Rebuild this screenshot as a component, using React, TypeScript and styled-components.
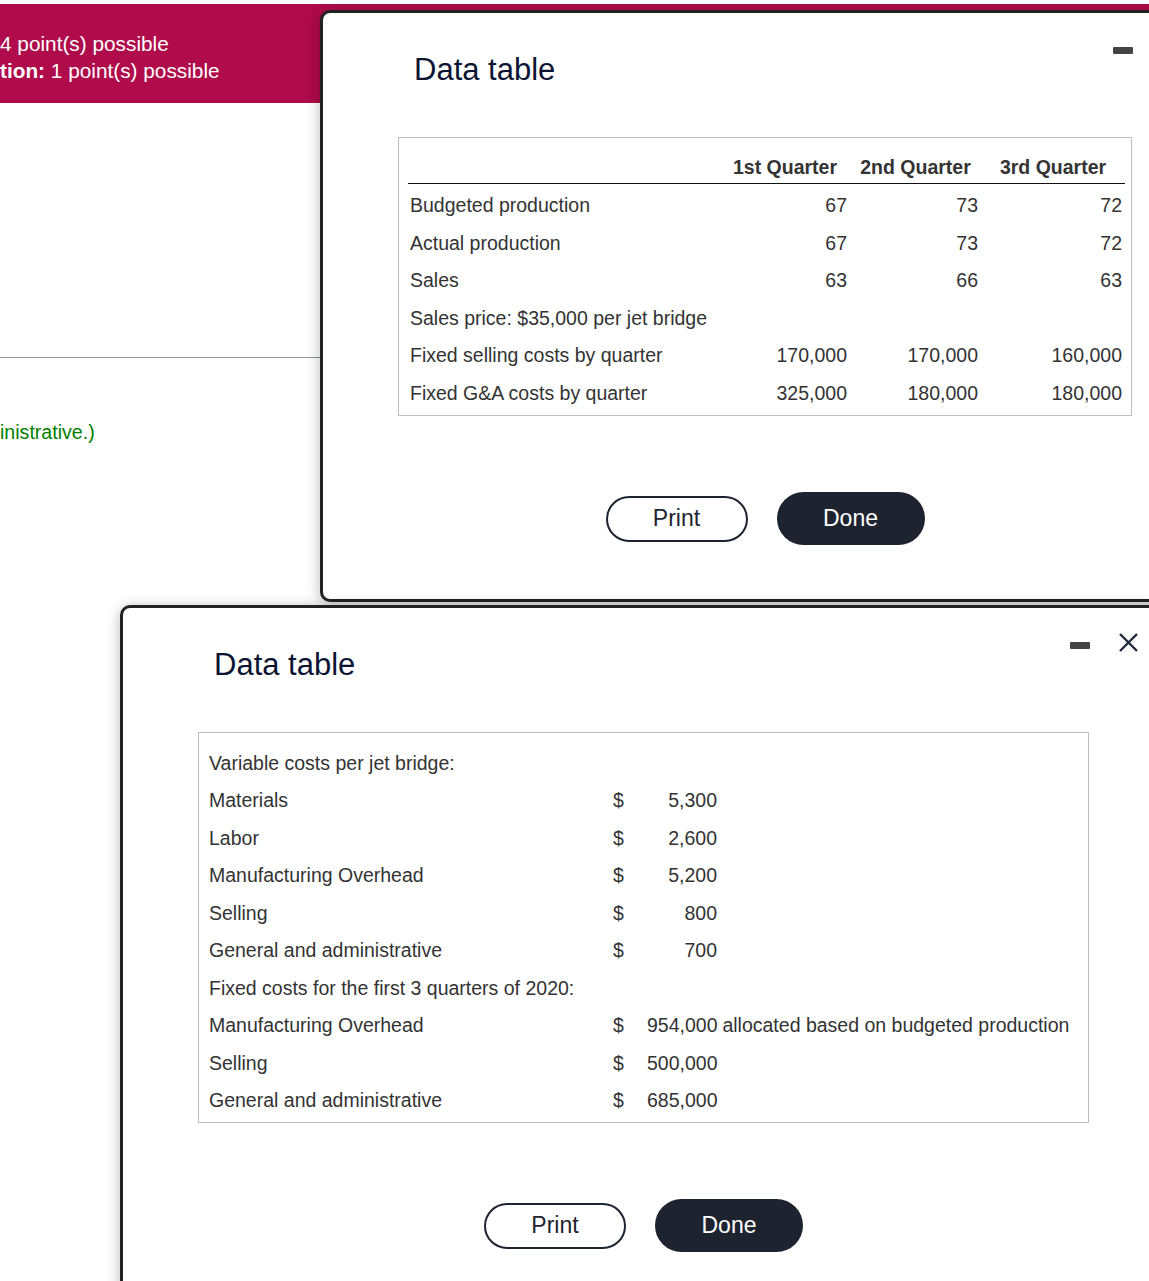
import React from 'react';
import styled, { createGlobalStyle } from 'styled-components';

const GlobalStyle = createGlobalStyle`
  html, body {
    margin: 0;
    padding: 0;
    background: #fff;
  }
  body {
    font-family: "Liberation Sans", Arial, sans-serif;
    overflow: hidden;
  }
`;

const Page = styled.div`
  position: relative;
  width: 1149px;
  height: 1281px;
  overflow: hidden;
  padding-top: 4px;
  box-sizing: border-box;
`;

const Banner = styled.div`
  height: 99px;
  background: #b00b4a;
  color: #fff;
  font-size: 20.8px;
  line-height: 27px;
  padding: 26px 0 0 0;
  box-sizing: border-box;
`;

const Divider = styled.div`
  margin-top: 254px;
  height: 1px;
  background: #8b94a3;
`;

const Note = styled.div`
  margin-top: 61px;
  color: #008000;
  font-size: 19.6px;
  line-height: 27px;
`;

const Modal = styled.div<{ $left: number; $top: number; $width: number; $height: number }>`
  position: absolute;
  left: ${(p) => p.$left}px;
  top: ${(p) => p.$top}px;
  width: ${(p) => p.$width}px;
  height: ${(p) => p.$height}px;
  box-sizing: border-box;
  border: 3px solid #222;
  border-radius: 10px;
  background: #fff;
  box-shadow: 0 2px 14px rgba(0, 0, 0, 0.28);
  padding: 39px 0 0 75px;
`;

const Title = styled.h2`
  margin: 0 0 49px 16px;
  font-size: 31px;
  line-height: 36px;
  font-weight: normal;
  color: #0b1533;
`;

const WindowControls = styled.div`
  position: absolute;
  top: 24px;
  right: 18px;
  display: flex;
  align-items: flex-start;
  gap: 28px;
`;

const MinimizeBar = styled.div`
  margin-top: 10px;
  width: 20px;
  height: 7px;
  border-radius: 1px;
  background: #444;
`;

const Content = styled.div<{ $width: number }>`
  width: ${(p) => p.$width}px;
  display: flex;
  flex-direction: column;
`;

const TableBox = styled.div<{ $pad: string }>`
  border: 1px solid #c0c0c0;
  padding: ${(p) => p.$pad};
`;

const Table = styled.table`
  width: 100%;
  border-collapse: collapse;
  table-layout: fixed;
  color: #333;
  font-size: 19.5px;
  line-height: 22px;
`;

const HeadCell = styled.th`
  font-weight: bold;
  text-align: center;
  padding: 10px 0 5px;
  border-bottom: 1px solid #111;
  white-space: nowrap;
`;

const QuarterCell = styled.td<{ $num?: boolean }>`
  padding: 10px 3px 5.5px 2px;
  text-align: ${(p) => (p.$num ? 'right' : 'left')};
  white-space: nowrap;
`;

const CostCell = styled.td<{ $indent: number }>`
  padding: 7.75px 0 7.75px ${(p) => p.$indent}px;
  white-space: nowrap;
`;

const Amount = styled.span`
  display: inline-block;
  width: 70px;
  text-align: right;
`;

const ButtonRow = styled.div`
  margin-top: 76px;
  display: flex;
  justify-content: center;
  align-items: center;
  gap: 29px;
`;

const PrintButton = styled.button`
  width: 142px;
  height: 46px;
  border: 2px solid #1e2330;
  border-radius: 23px;
  background: #fff;
  color: #1e2330;
  font-family: "Liberation Sans", Arial, sans-serif;
  font-size: 23px;
  cursor: pointer;
`;

const DoneButton = styled.button`
  width: 148px;
  height: 53px;
  border: none;
  border-radius: 27px;
  background: #1e2330;
  color: #fff;
  font-family: "Liberation Sans", Arial, sans-serif;
  font-size: 23px;
  cursor: pointer;
`;

const CloseIcon = () => (
  <svg width="21" height="21" viewBox="0 0 21 21">
    <path d="M2 2 L19 19 M19 2 L2 19" stroke="#1e2a3a" strokeWidth="2.4" fill="none" />
  </svg>
);

const quarterRows: { label: string; values: string[] }[] = [
  { label: 'Budgeted production', values: ['67', '73', '72'] },
  { label: 'Actual production', values: ['67', '73', '72'] },
  { label: 'Sales', values: ['63', '66', '63'] },
  { label: 'Sales price: $35,000 per jet bridge', values: [] },
  { label: 'Fixed selling costs by quarter', values: ['170,000', '170,000', '160,000'] },
  { label: 'Fixed G&A costs by quarter', values: ['325,000', '180,000', '180,000'] },
];

type CostRow =
  | { heading: string }
  | { label: string; amount: string; note?: string };

const costRows: CostRow[] = [
  { heading: 'Variable costs per jet bridge:' },
  { label: 'Materials', amount: '5,300' },
  { label: 'Labor', amount: '2,600' },
  { label: 'Manufacturing Overhead', amount: '5,200' },
  { label: 'Selling', amount: '800' },
  { label: 'General and administrative', amount: '700' },
  { heading: 'Fixed costs for the first 3 quarters of 2020:' },
  { label: 'Manufacturing Overhead', amount: '954,000', note: 'allocated based on budgeted production' },
  { label: 'Selling', amount: '500,000' },
  { label: 'General and administrative', amount: '685,000' },
];

const Buttons = () => (
  <ButtonRow>
    <PrintButton>Print</PrintButton>
    <DoneButton>Done</DoneButton>
  </ButtonRow>
);

const QuarterTable = () => (
  <TableBox $pad="8px 6px 6px 9px">
    <Table>
      <colgroup>
        <col style={{ width: 312 }} />
        <col style={{ width: 130 }} />
        <col style={{ width: 131 }} />
        <col style={{ width: 144 }} />
      </colgroup>
      <thead>
        <tr>
          <HeadCell />
          <HeadCell>1st Quarter</HeadCell>
          <HeadCell>2nd Quarter</HeadCell>
          <HeadCell>3rd Quarter</HeadCell>
        </tr>
      </thead>
      <tbody>
        {quarterRows.map((row) =>
          row.values.length === 0 ? (
            <tr key={row.label}>
              <QuarterCell colSpan={4}>{row.label}</QuarterCell>
            </tr>
          ) : (
            <tr key={row.label}>
              <QuarterCell>{row.label}</QuarterCell>
              {row.values.map((v, i) => (
                <QuarterCell key={i} $num>
                  {v}
                </QuarterCell>
              ))}
            </tr>
          ),
        )}
      </tbody>
    </Table>
  </TableBox>
);

const CostTable = () => (
  <TableBox $pad="11px 6px 3px 9px">
    <Table>
      <colgroup>
        <col style={{ width: 400 }} />
        <col style={{ width: 32 }} />
        <col />
      </colgroup>
      <tbody>
        {costRows.map((row, i) =>
          'heading' in row ? (
            <tr key={i}>
              <CostCell $indent={1} colSpan={3}>
                {row.heading}
              </CostCell>
            </tr>
          ) : (
            <tr key={i}>
              <CostCell $indent={1}>{row.label}</CostCell>
              <CostCell $indent={5}>$</CostCell>
              <CostCell $indent={7}>
                <Amount>{row.amount}</Amount>
                {row.note ? ` ${row.note}` : ''}
              </CostCell>
            </tr>
          ),
        )}
      </tbody>
    </Table>
  </TableBox>
);

export default function App() {
  return (
    <>
      <GlobalStyle />
      <Page>
        <Banner>
          <div>4 point(s) possible</div>
          <div>
            <b>tion:</b> 1 point(s) possible
          </div>
        </Banner>
        <Divider />
        <Note>inistrative.)</Note>

        <Modal $left={320} $top={10} $width={883} $height={592}>
          <WindowControls>
            <MinimizeBar />
            <CloseIcon />
          </WindowControls>
          <Title>Data table</Title>
          <Content $width={734}>
            <QuarterTable />
            <Buttons />
          </Content>
        </Modal>

        <Modal $left={120} $top={605} $width={1040} $height={700}>
          <WindowControls>
            <MinimizeBar />
            <CloseIcon />
          </WindowControls>
          <Title>Data table</Title>
          <Content $width={891}>
            <CostTable />
            <Buttons />
          </Content>
        </Modal>
      </Page>
    </>
  );
}
